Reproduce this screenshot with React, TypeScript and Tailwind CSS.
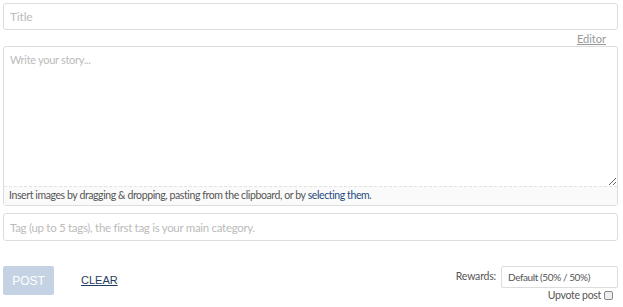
export default function App() {
  return (
    <div className="h-[307px] w-[623px] bg-white px-[3px] pt-[3px] font-['Lato','Open_Sans',sans-serif] text-[#333]">
      <div className="w-[615px]">
        <input
          type="text"
          placeholder="Title"
          className="block h-[27px] w-full rounded-[3px] border border-[#ddd] px-[6px] text-[12px] tracking-[-0.2px] outline-none placeholder:text-[#bbb]"
        />

        <div className="flex h-[16px] justify-end pr-[12px] pt-[3px]">
          <a href="#" className="text-[11px] leading-[12px] text-[#999] underline">
            Editor
          </a>
        </div>

        <div className="w-full rounded-[3px] border border-[#ddd]">
          <textarea
            placeholder="Write your story..."
            className="block h-[139px] w-full resize-y px-[6px] py-[5px] text-[11px] tracking-[-0.3px] outline-none placeholder:text-[#bbb]"
          />
          <div className="flex h-[19px] items-center border-t border-dashed border-[#e3e3e3] bg-[#fafafa] px-[5px] text-[10.5px] tracking-[-0.4px] text-[#555]">
            Insert images by dragging &amp; dropping, pasting from the clipboard, or by&nbsp;
            <a href="#" className="text-[#1e4b7a]">selecting them</a>.
          </div>
        </div>

        <input
          type="text"
          placeholder="Tag (up to 5 tags), the first tag is your main category."
          className="mt-[7px] block h-[28px] w-full rounded-[3px] border border-[#ddd] px-[6px] text-[11.5px] tracking-[-0.3px] outline-none placeholder:text-[#bbb]"
        />

        <div className="mt-[25px] flex items-start justify-between">
          <div className="flex items-center">
            <button
              type="button"
              className="h-[29px] w-[51px] rounded-[2px] bg-[#c4d2e3] font-['Liberation_Sans',sans-serif] text-[12px] text-white"
            >
              POST
            </button>
            <a
              href="#"
              className="ml-[27px] font-['Liberation_Sans',sans-serif] text-[11px] text-[#1f3c5e] underline"
            >
              CLEAR
            </a>
          </div>

          <div className="flex flex-col items-end">
            <div className="flex items-center gap-[5px]">
              <span className="text-[10.5px] tracking-[-0.2px] text-[#555]">Rewards:</span>
              <div className="flex h-[22px] w-[117px] items-center rounded-[2px] border border-[#ddd] px-[6px] text-[10px] tracking-[-0.4px] text-[#555]">
                Default (50% / 50%)
              </div>
            </div>
            <label className="mr-[5px] mt-[1px] flex items-center gap-[3px] text-[10.5px] leading-[12px] tracking-[-0.3px] text-[#555]">
              Upvote post
              <span className="h-[9px] w-[9px] rounded-[2px] border border-[#888] bg-[#eee]" />
            </label>
          </div>
        </div>
      </div>
    </div>
  );
}
